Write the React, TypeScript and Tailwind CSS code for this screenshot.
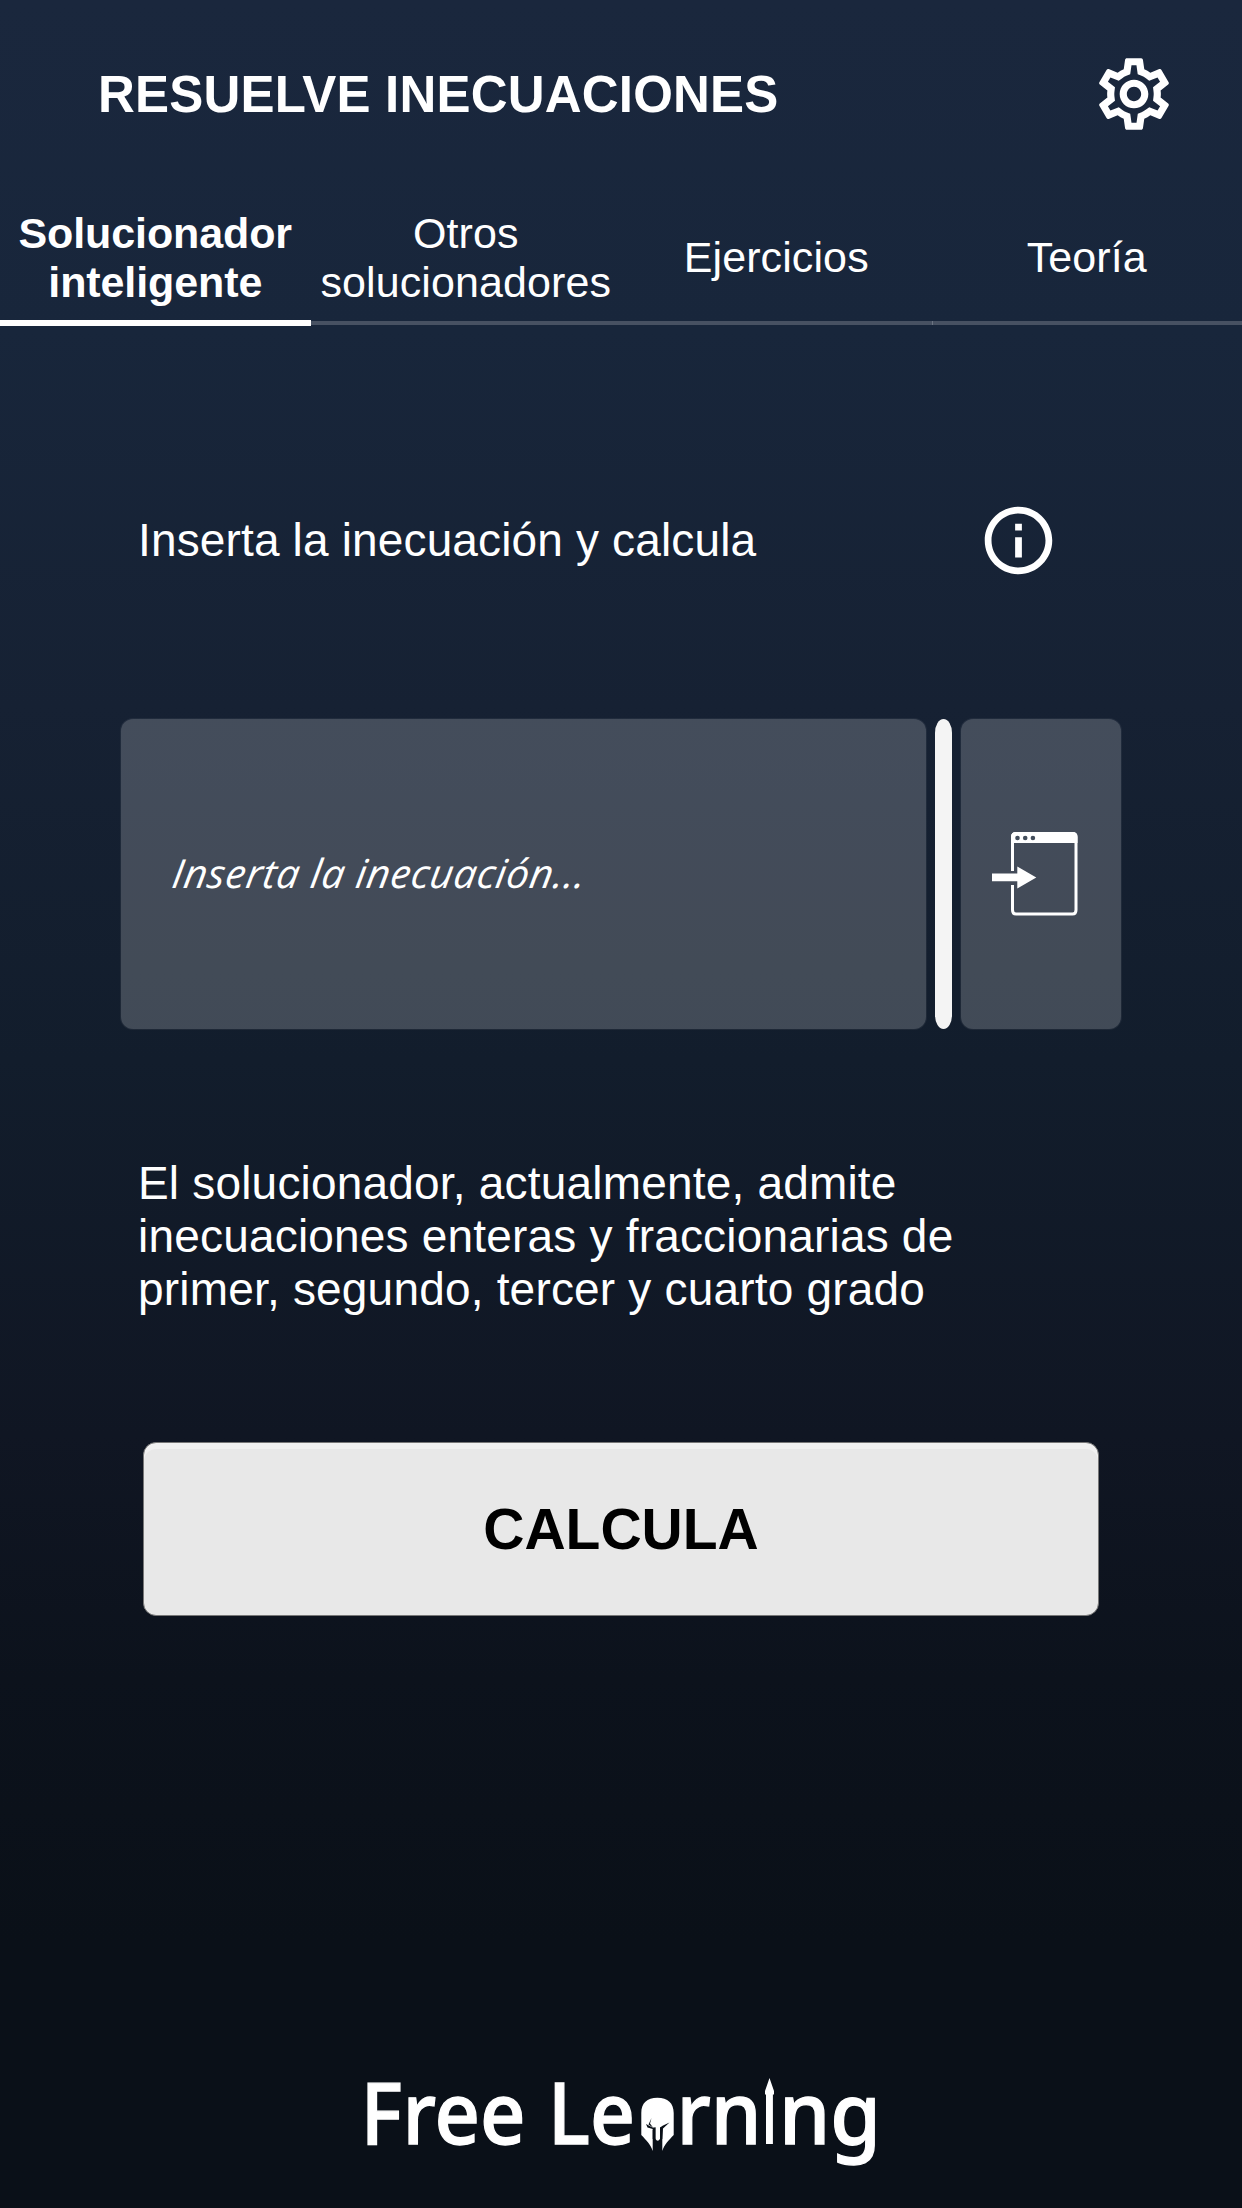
import React, { useState } from 'react';
import { MdOutlineInfo, MdOutlineSettings } from 'react-icons/md';

const tabs = ['Solucionador inteligente', 'Otros solucionadores', 'Ejercicios', 'Teoría'];

function InsertIcon() {
  return (
    <svg width="88" height="84" viewBox="0 0 88 84" fill="none">
      {/* window */}
      <path d="M21.5 39V5Q21.5 1.5 25 1.5H81.500Q85 1.5 85 5V78Q85 82 81.500 82H25Q21.5 82 21.5 78V53" stroke="white" strokeWidth="3" />
      <path d="M20 11V5Q20 0 25 0H81.500Q86.500 0 86.500 5V11Z" fill="white" />
      <circle cx="26.500" cy="6" r="2.300" fill="#424d5b" />
      <circle cx="34.200" cy="6" r="2.300" fill="#424d5b" />
      <circle cx="41.900" cy="6" r="2.300" fill="#424d5b" />
      <path d="M1 41.500H26.300V34.500L45.300 45.500L26.300 56.500V49.300H1Z" fill="white" />
    </svg>
  );
}

function Logo() {
  return (
    <svg
      width="530"
      height="125"
      viewBox="0 0 530 125"
      fill="white"
      className="font-['Noto_Sans',sans-serif] text-[86px] font-medium"
    >
      <g stroke="white" strokeWidth="1.3">
        <text x="0.5" y="92.5" textLength="165" lengthAdjust="spacingAndGlyphs">Free</text>
        <text x="188" y="92.5" textLength="87" lengthAdjust="spacingAndGlyphs">Le</text>
        <text x="316.500" y="92.5" textLength="85" lengthAdjust="spacingAndGlyphs">rn</text>
        <text x="419" y="92.5" textLength="102" lengthAdjust="spacingAndGlyphs">ng</text>
      </g>
      {/* helmet */}
      <g transform="translate(0 19)">
        <path d="M281.300 43C281.300 33 287 27.700 297.400 27.700S313.700 33 313.700 43V65C309 70 304.500 74 302.300 81V60L300.200 57V68.500Q297.700 73 295.300 68.500V57L292.700 60V81C290.500 74 286 70 281.300 65Z" />
        <path d="M286 54L292.500 57.500H295.500V69H292.700V59L287.500 57.500ZM291.500 48L290 53.500L293 57.500L288.500 54.500ZM309.500 52.500L303 58.500L302.300 69H300V57.500L303 55.500Z" fill="#0a1018" />
      </g>
      {/* spear */}
      <path d="M409.500 27L414 40V43.500H412.900V93H406V43.500H405V40Z" />
    </svg>
  );
}

export default function App() {
  const [active, setActive] = useState(0);
  const [value, setValue] = useState('');

  return (
    <div className="flex h-[2208px] w-[1242px] flex-col overflow-hidden bg-[linear-gradient(to_bottom,#1a273d_0%,#18263b_15%,#162133_32%,#121d2c_48%,#101623_65%,#0c121c_76%,#0a1018_88%,#0a1018_100%)] font-['Liberation_Sans',Arial,sans-serif] text-white">
      <header className="flex h-[195px] items-start justify-between pr-[65px] pl-[98px]">
        <h1 className="mt-[65px] text-[51px] leading-[60px] font-bold tracking-[0.2px] whitespace-nowrap">
          RESUELVE INECUACIONES
        </h1>
        <button className="mt-[51px]">
          <MdOutlineSettings size={86} />
        </button>
      </header>

      <nav className="grid grid-cols-4">
        {tabs.map((tab, i) => (
          <button key={tab} onClick={() => setActive(i)} className="flex flex-col">
            <span
              className={`flex h-[125px] w-full items-center justify-center text-center text-[43px] leading-[49px] ${
                i === active ? 'font-bold tracking-[-0.1px]' : 'tracking-[0.1px]'
              }`}
            >
              {tab}
            </span>
            <span
              className={`w-full ${i === active ? 'h-1.5 bg-white' : 'my-px h-1 bg-[#475162]'} ${
                i === 3 ? 'border-l border-[#6b7482]' : ''
              }`}
            />
          </button>
        ))}
      </nav>

      <main className="flex flex-col">
        <div className="mt-[174px] flex h-[81px] items-center justify-between pr-[183px] pl-[138px]">
          <p className="text-[46px] leading-[53px] tracking-[0.15px]">Inserta la inecuación y calcula</p>
          <button>
            <MdOutlineInfo size={81} />
          </button>
        </div>

        <div className="mt-[137px] flex h-[312px] px-[120px]">
          <div className="flex w-[807px] items-center rounded-[13px] border border-white/5 bg-white/20 bg-clip-padding px-[52px] pb-0.5">
            <input
              value={value}
              onChange={(e) => setValue(e.target.value)}
              placeholder="Inserta la inecuación..."
              className="w-full -skew-x-[9deg] bg-transparent font-['Open_Sans',sans-serif] text-[40px] tracking-[0.68px] italic outline-none placeholder:text-white"
            />
          </div>
          <div className="my-px ml-2 w-[17px] rounded-[50%/14px] bg-[#f4f4f4]" />
          <button className="ml-2 flex w-[162px] items-center justify-center rounded-[13px] border border-white/5 bg-white/20 bg-clip-padding pr-3">
            <InsertIcon />
          </button>
        </div>

        <p className="mt-[127px] pl-[138px] text-[46px] leading-[53px] tracking-[0.19px] whitespace-nowrap">
          El solucionador, actualmente, admite
          <br />
          inecuaciones enteras y fraccionarias de
          <br />
          primer, segundo, tercer y cuarto grado
        </p>

        <button className="mx-[143px] mt-[126px] h-[174px] rounded-[13px] border border-[#777] bg-[#e8e8e8] text-[57px] leading-[64px] font-bold text-black shadow-[inset_0_6px_0_#f1f1f1]">
          CALCULA
        </button>
      </main>

      <footer className="mt-[435px] pl-[360px]">
        <Logo />
      </footer>
    </div>
  );
}
